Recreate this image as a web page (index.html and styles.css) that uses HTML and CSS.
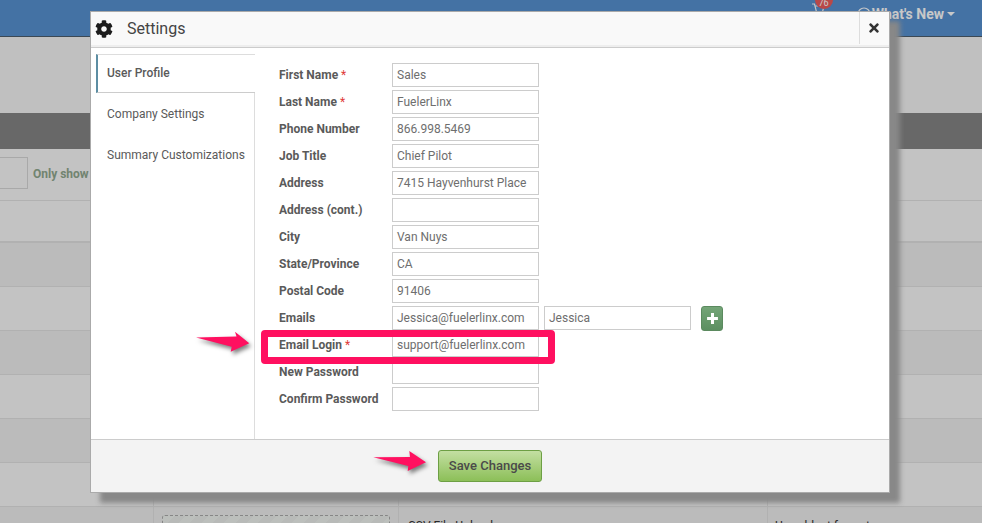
FILE: index.html
```
<!DOCTYPE html>
<html lang="en">
<head>
<meta charset="utf-8">
<title>Settings</title>
<link rel="stylesheet" href="styles.css">
</head>
<body>
<div class="page">
  <header class="topbar">
    <div class="cart">
      <svg class="cart-icon" viewBox="0 0 14 14" width="14" height="14"><path d="M1 1h2.5l2 8h6l1.5-6H4.5" fill="none" stroke="#f2f6fa" stroke-width="1.2"/></svg>
      <span class="badge">76</span>
    </div>
    <div class="whats-new">
      <svg class="help-icon" viewBox="0 0 14 14" width="14" height="14"><circle cx="7" cy="7" r="6" fill="none" stroke="#f2f6fa" stroke-width="1.2"/></svg>
      <span>What's New</span>
      <span class="caret"></span>
    </div>
  </header>
  <div class="subhead"></div>
  <div class="band"></div>
  <div class="filter-row">
    <div class="filter-input"></div>
    <span class="filter-label">Only show</span>
  </div>
  <div class="row row-short row-a"></div>
  <div class="row row-b"></div>
  <div class="row row-a"></div>
  <div class="row row-b"></div>
  <div class="row row-a"></div>
  <div class="row row-b"></div>
  <div class="row row-a row-cols">
    <div class="cell cell-1"></div>
    <div class="cell cell-2"></div>
    <div class="cell cell-3"></div>
    <div class="cell cell-4"></div>
  </div>
  <div class="row row-b row-cols">
    <div class="cell cell-1"></div>
    <div class="cell cell-2"><div class="dropzone"></div></div>
    <div class="cell cell-3 cell-text">CSV File Upload</div>
    <div class="cell cell-4 cell-text">Uses blast format</div>
  </div>
</div>

<div class="backdrop"></div>

<section class="modal">
  <div class="modal-header">
    <svg class="gear" viewBox="0 0 512 512" width="18" height="18"><path d="M487.4 315.7l-42.6-24.6c4.3-23.2 4.3-47 0-70.2l42.6-24.6c4.9-2.8 7.1-8.6 5.5-14-11.1-35.6-30-67.8-54.7-94.6-3.8-4.1-10-5.1-14.8-2.3L380.8 110c-17.9-15.4-38.5-27.3-60.8-35.1V25.8c0-5.6-3.9-10.5-9.4-11.7-36.7-8.2-74.3-7.8-109.2 0-5.5 1.2-9.4 6.1-9.4 11.7V75c-22.2 7.9-42.8 19.8-60.8 35.1L88.7 85.5c-4.9-2.8-11-1.9-14.8 2.3-24.7 26.7-43.6 58.9-54.7 94.6-1.7 5.4.6 11.2 5.5 14L67.3 221c-4.3 23.2-4.3 47 0 70.2l-42.6 24.6c-4.9 2.8-7.1 8.6-5.5 14 11.1 35.6 30 67.8 54.7 94.6 3.8 4.1 10 5.1 14.8 2.3l42.6-24.6c17.9 15.4 38.5 27.3 60.8 35.1v49.2c0 5.6 3.9 10.5 9.4 11.7 36.7 8.2 74.3 7.8 109.2 0 5.5-1.2 9.4-6.1 9.4-11.7v-49.2c22.2-7.9 42.8-19.8 60.8-35.1l42.6 24.6c4.9 2.8 11 1.9 14.8-2.3 24.7-26.7 43.6-58.9 54.7-94.6 1.5-5.5-.7-11.3-5.6-14.1zM256 336c-44.1 0-80-35.9-80-80s35.9-80 80-80 80 35.9 80 80-35.9 80-80 80z" fill="#1c1c1c"/></svg>
    <h2 class="modal-title">Settings</h2>
    <div class="close-box">
      <svg viewBox="0 0 352 512" width="10" height="14"><path d="M242.72 256l100.07-100.07c12.28-12.28 12.28-32.19 0-44.48l-22.24-22.24c-12.28-12.28-32.19-12.28-44.48 0L176 189.28 75.93 89.21c-12.28-12.28-32.19-12.28-44.48 0L9.21 111.45c-12.28 12.28-12.28 32.19 0 44.48L109.28 256 9.21 356.07c-12.28 12.28-12.28 32.19 0 44.48l22.24 22.24c12.28 12.28 32.2 12.28 44.48 0L176 322.72l100.07 100.07c12.28 12.28 32.2 12.28 44.48 0l22.24-22.24c12.28-12.28 12.28-32.19 0-44.48L242.72 256z" fill="#333"/></svg>
    </div>
  </div>
  <div class="modal-body">
    <nav class="tabs">
      <div class="tab tab-active">User Profile</div>
      <div class="tab-rest">
        <div class="tab">Company Settings</div>
        <div class="tab">Summary Customizations</div>
      </div>
    </nav>
    <form class="form">
      <div class="field"><label class="label">First Name <i class="req">*</i></label><div class="input">Sales</div></div>
      <div class="field"><label class="label">Last Name <i class="req">*</i></label><div class="input">FuelerLinx</div></div>
      <div class="field"><label class="label">Phone Number</label><div class="input">866.998.5469</div></div>
      <div class="field"><label class="label">Job Title</label><div class="input">Chief Pilot</div></div>
      <div class="field"><label class="label">Address</label><div class="input">7415 Hayvenhurst Place</div></div>
      <div class="field"><label class="label">Address (cont.)</label><div class="input"></div></div>
      <div class="field"><label class="label">City</label><div class="input">Van Nuys</div></div>
      <div class="field"><label class="label">State/Province</label><div class="input">CA</div></div>
      <div class="field"><label class="label">Postal Code</label><div class="input">91406</div></div>
      <div class="field"><label class="label">Emails</label><div class="input">Jessica@fuelerlinx.com</div><div class="input input-second">Jessica</div>
        <div class="add-btn"><svg viewBox="0 0 12 12" width="13" height="13"><path d="M4.6 1h2.8v3.6H11v2.8H7.4V11H4.6V7.4H1V4.6h3.6z" fill="#fff"/></svg></div>
      </div>
      <div class="field"><label class="label">Email Login <i class="req">*</i></label><div class="input">support@fuelerlinx.com</div></div>
      <div class="field"><label class="label">New Password</label><div class="input"></div></div>
      <div class="field"><label class="label">Confirm Password</label><div class="input"></div></div>
    </form>
  </div>
  <div class="modal-footer">
    <button class="save" type="button">Save Changes</button>
  </div>
</section>

<div class="highlight"></div>
<svg class="arrow arrow-one" viewBox="0 0 60 26" width="60" height="26"><path d="M0 6.5 L40.5 5.5 L39 .7 L53.3 12.3 L34.7 20.7 L35.7 15.7 Z" fill="#ff1060"/></svg>
<svg class="arrow arrow-two" viewBox="0 0 60 26" width="60" height="26"><path d="M.3 7.3 L37 7 L36.3 1 L53 12.3 L34.7 21 L35.3 16 Z" fill="#ff1060"/></svg>
</body>
</html>
```

FILE: styles.css
```
* { box-sizing: border-box; }
html, body { margin: 0; height: 100%; }
body {
  width: 982px;
  height: 523px;
  overflow: hidden;
  position: relative;
  font-family: Roboto, "Liberation Sans", sans-serif;
  font-size: 12px;
  color: #555;
}

/* page behind the dialog (colours before the backdrop dims them) */
.page { height: 523px; overflow: hidden; background: #f0f0f0; }
.topbar {
  height: 37px;
  background: #558fce;
  border-bottom: 1px solid #4a5a6a;
  display: flex;
  justify-content: flex-end;
  padding-right: 27px;
  color: #fafafa;
  font-weight: 700;
  font-size: 14px;
}
.cart { position: relative; width: 14px; height: 14px; margin: 3px 32px 0 0; }
.cart-icon { display: block; }
.badge {
  position: absolute;
  left: 4px;
  top: -12px;
  width: 18px;
  height: 18px;
  border-radius: 50%;
  background: #e85a5a;
  color: #fff;
  font-size: 9px;
  font-weight: 400;
  line-height: 25px;
  text-align: center;
}
.whats-new { display: flex; align-items: center; height: 28px; gap: 1px; }
.help-icon { flex: none; }
.caret {
  width: 0;
  height: 0;
  margin-left: 2px;
  border-left: 4px solid transparent;
  border-right: 4px solid transparent;
  border-top: 4px solid #fafafa;
}
.subhead { height: 76px; background: #f0f0f0; }
.band { height: 36px; background: #838383; }
.filter-row {
  height: 52px;
  background: #f4f4f4;
  border-bottom: 1px solid #dedede;
  display: flex;
  align-items: center;
  gap: 5px;
}
.filter-input {
  width: 28px;
  height: 32px;
  margin-top: -4px;
  background: #f4f4f4;
  border: 1px solid #d4d4d4;
  border-left: 0;
}
.filter-label { font-weight: 700; color: #8ea58c; margin-top: -1px; white-space: nowrap; }
.row { height: 44px; border-bottom: 1px solid #dedede; }
.row-short { height: 42px; border-bottom-width: 2px; }
.row-a { background: #f4f4f4; }
.row-b { background: #eaeaea; }
.row-cols { display: flex; }
.cell { height: 100%; border-right: 1px solid #dedede; }
.cell-1 { width: 154px; }
.cell-2 { width: 245px; padding: 8px 8px 0; }
.cell-3 { width: 369px; }
.cell-4 { flex: 1; border-right: 0; }
.cell-text { padding: 12px 0 0 9px; color: #333; font-size: 12px; white-space: nowrap; }
.cell-4.cell-text { padding-left: 7px; }
.dropzone {
  height: 40px;
  border: 1px dashed #a8a8a8;
  border-radius: 3px;
  background: repeating-linear-gradient(135deg, #ecefec 0 8px, #e6e9e6 8px 16px);
}
.backdrop { position: absolute; inset: 0; background: rgba(0, 0, 0, .2); }

/* dialog */
.modal {
  position: absolute;
  left: 90px;
  top: 11px;
  width: 800px;
  height: 482px;
  background: #fff;
  border: 1px solid #aaa;
  box-shadow: 10px 10px 5px #888;
  display: flex;
  flex-direction: column;
}
.modal-header {
  height: 36px;
  flex: none;
  background: #f9f9f9;
  border-bottom: 1px solid #ccc;
  box-shadow: inset 0 -2px 0 #eee;
  display: flex;
  align-items: center;
  padding-left: 4px;
}
.gear { flex: none; margin-top: -2px; }
.modal-title {
  margin: -2px 0 0 14px;
  font-size: 16px;
  font-weight: 400;
  color: #444;
}
.close-box {
  margin-left: auto;
  width: 30px;
  height: 32px;
  align-self: flex-start;
  border-left: 1px solid #ddd;
  padding-right: 1px;
  display: flex;
  align-items: center;
  justify-content: center;
}
.modal-body { flex: 1; display: flex; min-height: 0; }
.tabs {
  width: 164px;
  flex: none;
  padding: 6px 0 0 5px;
  display: flex;
  flex-direction: column;
}
.tab { height: 41px; padding: 11px 0 0 11px; color: #5a5a5a; line-height: 14px; white-space: nowrap; }
.tab-active {
  height: 39px;
  padding-top: 11px;
  font-weight: 500;
  border-left: 2px solid #5d8ea3;
  border-top: 1px solid #ddd;
  border-bottom: 1px solid #ccc;
  padding-left: 9px;
}
.tab-rest { flex: 1; border-right: 1px solid #ddd; padding-top: 3px; }
.tab-rest .tab { padding-top: 11px; }
.form { padding: 15px 0 0 24px; flex: 1; }
.field { display: flex; align-items: center; height: 24px; margin-bottom: 3px; position: relative; }
.label { width: 113px; font-weight: 700; color: #5a5a5a; flex: none; white-space: nowrap; }
.req { color: #e03a3a; font-style: normal; font-weight: 400; }
.input {
  width: 147px;
  height: 24px;
  flex: none;
  border: 1px solid #ccc;
  padding: 0 4px;
  line-height: 22px;
  color: #6e6e6e;
  white-space: nowrap;
  overflow: hidden;
  background: #fff;
}
.input-second { margin-left: 5px; }
.add-btn {
  width: 22px;
  height: 25px;
  margin-left: 10px;
  background: linear-gradient(#74a577, #5c8f61);
  border: 1px solid #5b8a5f;
  border-radius: 3px;
  display: flex;
  align-items: center;
  justify-content: center;
}
.modal-footer {
  height: 53px;
  flex: none;
  background: #f3f3f3;
  border-top: 1px solid #ccc;
  display: flex;
  justify-content: center;
  padding-top: 10px;
}
.save {
  width: 104px;
  height: 32px;
  font-family: inherit;
  font-size: 13px;
  font-weight: 500;
  color: #4a4a4a;
  background: linear-gradient(#c3dfa2, #8cbf58);
  border: 1px solid #6d9f44;
  border-radius: 3px;
  padding: 0 0 2px;
}

/* annotations on top of the screenshot */
.highlight {
  position: absolute;
  left: 261px;
  top: 330px;
  width: 294px;
  height: 34px;
  border: 7px solid #ff1060;
  border-radius: 4px;
}
.arrow { position: absolute; overflow: visible; filter: drop-shadow(2px 3px 2px rgba(0, 0, 0, .5)); }
.arrow-one { left: 196px; top: 331px; }
.arrow-two { left: 373px; top: 450px; }
```
